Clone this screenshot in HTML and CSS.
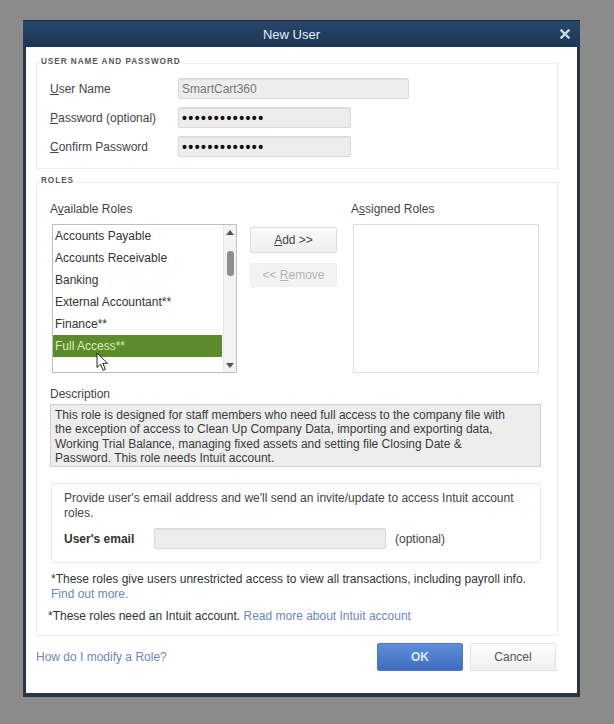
FILE: index.html
```html
<!DOCTYPE html>
<html lang="en">
<head>
<meta charset="utf-8">
<title>New User</title>
<link rel="stylesheet" href="styles.css">
</head>
<body>
<div class="dialog">
  <div class="titlebar">
    <span class="title">New User</span>
    <svg class="close" width="10" height="10" viewBox="0 0 10 10"><path d="M1.5 1.5L8.5 8.5M8.5 1.5L1.5 8.5" stroke="#cfd9e5" stroke-width="2.4" stroke-linecap="square"/></svg>
  </div>
  <div class="body">
    <fieldset class="group group-user">
      <legend>USER NAME AND PASSWORD</legend>
      <div class="row">
        <span class="lbl row-lbl"><u>U</u>ser Name</span>
        <div class="field field-wide">SmartCart360</div>
      </div>
      <div class="row">
        <span class="lbl row-lbl"><u>P</u>assword (optional)</span>
        <div class="field field-pw"><span class="dots">•••••••••••••</span></div>
      </div>
      <div class="row">
        <span class="lbl row-lbl"><u>C</u>onfirm Password</span>
        <div class="field field-pw"><span class="dots">•••••••••••••</span></div>
      </div>
    </fieldset>

    <fieldset class="group group-roles">
      <legend>ROLES</legend>
      <div class="lists">
        <div class="col">
          <div class="lbl col-lbl">A<u>v</u>ailable Roles</div>
          <div class="listbox">
            <ul class="items">
              <li>Accounts Payable</li>
              <li>Accounts Receivable</li>
              <li>Banking</li>
              <li>External Accountant**</li>
              <li>Finance**</li>
              <li class="sel">Full Access**</li>
            </ul>
            <div class="scrollbar">
              <div class="arrow up"></div>
              <div class="track"><div class="thumb"></div></div>
              <div class="arrow down"></div>
            </div>
            <svg class="cursor" width="13" height="20" viewBox="0 0 13 20"><path d="M1 1L1 15.5L4.5 12.3L7.2 18.3L9.4 17.3L6.8 11.5L11.5 11.2Z" fill="#fff" stroke="#222" stroke-width="1" stroke-linejoin="round"/></svg>
          </div>
        </div>
        <div class="btns">
          <div class="btn btn-add"><span><u>A</u>dd &gt;&gt;</span></div>
          <div class="btn btn-remove"><span>&lt;&lt; <u>R</u>emove</span></div>
        </div>
        <div class="col col-assigned">
          <div class="lbl col-lbl">A<u>s</u>signed Roles</div>
          <div class="listbox listbox-empty"></div>
        </div>
      </div>

      <div class="lbl desc-lbl">Description</div>
      <div class="desc">This role is designed for staff members who need full access to the company file with<br>the exception of access to Clean Up Company Data, importing and exporting data,<br>Working Trial Balance, managing fixed assets and setting file Closing Date &amp;<br>Password. This role needs Intuit account.</div>

      <div class="email-box">
        <p class="email-text">Provide user's email address and we'll send an invite/update to access Intuit account<br>roles.</p>
        <div class="email-row">
          <span class="email-lbl">User's email</span>
          <div class="field field-email"></div>
          <span class="optional">(optional)</span>
        </div>
      </div>

      <p class="note">*These roles give users unrestricted access to view all transactions, including payroll info.<br><a class="link" href="#">Find out more.</a></p>
      <p class="note note2">*These roles need an Intuit account. <a class="link" href="#">Read more about Intuit account</a></p>
    </fieldset>

    <div class="footer">
      <a class="link help" href="#">How do I modify a Role?</a>
      <div class="actions">
        <div class="btn-ok">OK</div>
        <div class="btn-cancel">Cancel</div>
      </div>
    </div>
  </div>
</div>
</body>
</html>
```

FILE: styles.css
```css
* { box-sizing: border-box; }
html, body { margin: 0; padding: 0; }
body {
  background: #8b8b8b;
  width: 614px;
  height: 724px;
  overflow: hidden;
  font-family: "Liberation Sans", Arial, sans-serif;
  font-size: 12px;
  color: #3d3d3d;
}
.dialog {
  margin: 20px 0 0 23px;
  width: 557px;
  height: 677px;
  background: #2b3447;
  padding: 0 3px 4px 3px;
  display: flex;
  flex-direction: column;
}
.titlebar {
  margin: 0 -3px;
  height: 27px;
  background: linear-gradient(#27476b, #1c3654);
  display: flex;
  align-items: center;
  border-top: 1px solid #1a2b40;
}
.title {
  flex: 1;
  text-align: center;
  color: #e6edf5;
  font-size: 13px;
}
.close { margin-right: 10px; }
.body {
  flex: 1;
  background: #fff;
  display: flex;
  flex-direction: column;
}
u { text-decoration: underline; text-underline-offset: 1px; }

.group {
  margin: 0 19px 0 10px;
  padding: 0 16px 0 13px;
  border: 1px solid #ececec;
  min-width: 0;
}
.group legend {
  margin-left: -10px;
  padding: 0 1px 3px 1px;
  font-size: 8.2px;
  line-height: 12px;
  font-weight: bold;
  letter-spacing: 0.95px;
  color: #555;
}
.group-user { margin-top: 9px; padding-top: 7px; padding-bottom: 11px; }
.row {
  display: flex;
  align-items: center;
  height: 21px;
  margin-bottom: 8px;
}
.row:last-child { margin-bottom: 0; }
.lbl { color: #444; font-size: 12px; }
.row-lbl { width: 128px; }
.field {
  height: 21px;
  background: #ededed;
  border: 1px solid #d9d9d9;
  border-radius: 2px;
  box-shadow: inset 0 1px 1px rgba(0,0,0,0.06);
  padding-left: 3px;
  display: flex;
  align-items: center;
  color: #777;
}
.field-wide { width: 231px; }
.field-pw { width: 173px; }
.dots {
  color: #111;
  font-size: 14px;
  font-weight: bold;
  letter-spacing: 1.45px;
  line-height: 14px;
}

.group-roles { margin-top: 6px; padding-top: 12px; padding-bottom: 11px; }
.lists { display: flex; }
.col { width: 187px; display: flex; flex-direction: column; }
.col-lbl { line-height: 14px; margin-bottom: 8px; }
.col .listbox { margin-left: 2px; }
.listbox {
  position: relative;
  width: 185px;
  height: 149px;
  border: 1px solid #bfbfbf;
  display: flex;
  background: #fff;
}
.items {
  flex: 1;
  list-style: none;
  margin: 0;
  padding: 0;
  overflow: hidden;
}
.items li {
  height: 22px;
  line-height: 22px;
  padding-left: 2px;
  color: #333;
  white-space: nowrap;
}
.items li.sel {
  background: #5c8b2b;
  color: #d9efbd;
  margin-right: 1px;
}
.scrollbar {
  width: 13px;
  background: #f3f3f3;
  border-left: 1px solid #e6e6e6;
  display: flex;
  flex-direction: column;
  align-items: center;
}
.arrow { height: 14px; width: 12px; display: flex; align-items: center; justify-content: center; }
.arrow.up::before {
  content: "";
  border-left: 4px solid transparent;
  border-right: 4px solid transparent;
  border-bottom: 5px solid #555;
}
.arrow.down::before {
  content: "";
  border-left: 4px solid transparent;
  border-right: 4px solid transparent;
  border-top: 5px solid #555;
}
.track { flex: 1; width: 100%; display: flex; justify-content: center; }
.thumb {
  margin-top: 12px;
  width: 7px;
  height: 25px;
  background: #8e8e8e;
  border-radius: 3px;
}
.cursor { position: absolute; left: 43px; top: 127px; }
.btns {
  width: 87px;
  margin: 25px 14px 0 13px;
  display: flex;
  flex-direction: column;
  gap: 10px;
}
.btn {
  display: flex;
  align-items: center;
  justify-content: center;
  font-size: 12px;
  border-radius: 2px;
}
.btn-add {
  height: 26px;
  background: linear-gradient(#fbfbfb, #efefef);
  border: 1px solid #dcdcdc;
  color: #444;
}
.btn-remove {
  height: 24px;
  background: #f3f3f3;
  border: 1px solid #ededed;
  color: #b3b3b3;
}
.col-assigned { width: 187px; }
.listbox-empty { width: 186px; border-color: #dddddd; }

.desc-lbl { line-height: 14px; margin-top: 14px; }
.desc {
  margin-top: 3px;
  height: 63px;
  background: #ededed;
  border: 1px solid #cfcfcf;
  padding: 3px 4px;
  line-height: 14.3px;
  color: #3a3a3a;
  white-space: nowrap;
}
.email-box {
  margin: 16px 0 0 1px;
  height: 80px;
  border: 1px solid #ebebeb;
  padding: 7px 12px 0 12px;
}
.email-text { margin: 0; line-height: 15px; color: #444; }
.email-row { display: flex; align-items: center; margin-top: 7px; }
.email-lbl { width: 90px; font-weight: bold; color: #333; }
.field-email { width: 232px; }
.optional { margin-left: 9px; color: #444; }
.note { margin: 9px 0 0 1px; line-height: 15px; color: #333; }
.note2 { margin: 7px 0 0 -2px; }
.link { color: #6d87b8; text-decoration: none; }

.footer {
  margin: 7px 21px 0 10px;
  display: flex;
  align-items: center;
  justify-content: space-between;
}
.help { font-size: 12px; }
.actions { display: flex; gap: 7px; }
.btn-ok, .btn-cancel {
  width: 86px;
  height: 28px;
  display: flex;
  align-items: center;
  justify-content: center;
  border-radius: 2px;
  font-size: 12px;
}
.btn-ok {
  background: linear-gradient(#5f8fd8, #3e6dbf);
  border: 1px solid #4a78c4;
  color: #dde7f7;
  font-weight: bold;
}
.btn-cancel {
  background: linear-gradient(#ffffff, #eeeeee);
  border: 1px solid #e0e0e0;
  color: #555;
}
```
